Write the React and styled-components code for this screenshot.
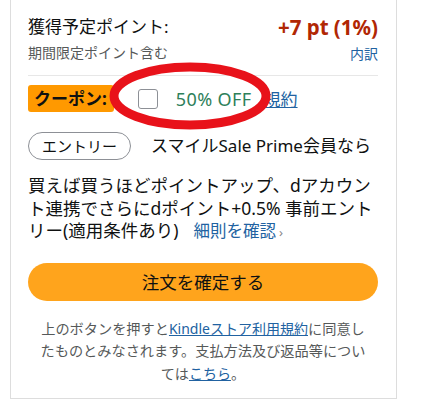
import React from "react";
import styled, { createGlobalStyle } from "styled-components";

const GlobalStyle = createGlobalStyle`
  body {
    margin: 0;
    background: #fff;
    font-family: "Noto Sans", "Noto Sans CJK JP", sans-serif;
    color: #0f1111;
  }
`;

const Card = styled.div`
  margin-left: 10px;
  width: 350px;
  border: 1px solid #dddddd;
  border-top: none;
  padding: 15px 18px 13px 17px;
  box-sizing: content-box;
`;

const Row = styled.div`
  display: flex;
  justify-content: space-between;
  align-items: center;
  height: ${(p) => p.h || 24}px;
  margin-top: ${(p) => p.top || 0}px;
`;

const Label = styled.span`
  font-size: 17px;
  line-height: 24px;
`;

const Price = styled.span`
  font-size: 20.5px;
  line-height: 24px;
  font-weight: 700;
  color: #b12704;
`;

const Sub = styled.span`
  font-size: 14px;
  line-height: 20px;
  color: #565959;
`;

const Link = styled.a`
  color: #2162a1;
  font-size: ${(p) => p.size || 14}px;
  text-decoration: ${(p) => (p.underline ? "underline" : "none")};
  cursor: pointer;
`;

const Divider = styled.hr`
  border: none;
  border-top: 1px solid #e7e7e7;
  margin: 12px 0 9px;
`;

const CouponRow = styled.div`
  position: relative;
  display: flex;
  align-items: center;
  height: 27px;
`;

const Badge = styled.span`
  background: #ff9900;
  border-radius: 3px;
  font-weight: 700;
  font-size: 17px;
  line-height: 27px;
  padding: 0 7px 0 6px;
`;

const Check = styled.span`
  width: 18px;
  height: 18px;
  border: 1px solid #8d9096;
  border-radius: 3px;
  margin-left: 24px;
  background: #fff;
`;

const Off = styled.span`
  color: #2e805a;
  font-size: 18px;
  letter-spacing: 0.4px;
  margin-left: 18px;
  margin-right: 12px;
`;

const Mark = styled.svg`
  position: absolute;
  left: 78px;
  top: -26px;
  pointer-events: none;
`;

const EntryRow = styled.div`
  display: flex;
  align-items: center;
  gap: 20px;
  margin-top: 20px;
`;

const Pill = styled.span`
  border: 1px solid #8d9096;
  border-radius: 14px;
  height: 26px;
  line-height: 26px;
  padding: 0 13px;
  font-size: 15px;
`;

const Para = styled.div`
  margin-top: 14px;
  font-size: 17.5px;
  line-height: 22.5px;
`;

const Line = styled.div`
  white-space: nowrap;
`;

const Detail = styled(Link)`
  margin-left: 15px;
`;

const Chevron = styled.span`
  color: #888;
  font-size: 13px;
  margin-left: 3px;
`;

const Button = styled.button`
  display: block;
  width: 100%;
  height: 38px;
  margin-top: 19px;
  border: none;
  border-radius: 19px;
  background: #ffa41c;
  font-family: inherit;
  font-size: 17.5px;
  color: #0f1111;
`;

const Note = styled.div`
  margin-top: 17px;
  text-align: center;
  font-size: 14.2px;
  line-height: 22.5px;
  color: #565959;
`;

export default function App() {
  return (
    <>
      <GlobalStyle />
      <Card>
        <Row>
          <Label>獲得予定ポイント:</Label>
          <Price>+7 pt (1%)</Price>
        </Row>
        <Row top={4} h={20}>
          <Sub>期間限定ポイント含む</Sub>
          <Link>内訳</Link>
        </Row>
        <Divider />
        <CouponRow>
          <Badge>クーポン:</Badge>
          <Check />
          <Off>50% OFF</Off>
          <Link size={17} underline>
            規約
          </Link>
          <Mark width="168" height="74" viewBox="0 0 168 74">
            <ellipse cx="84" cy="37" rx="76" ry="29" fill="none" stroke="#e8121a" strokeWidth="9" />
          </Mark>
        </CouponRow>
        <EntryRow>
          <Pill>エントリー</Pill>
          <Label>スマイルSale Prime会員なら</Label>
        </EntryRow>
        <Para>
          <Line>{"買えば買うほどポイントアップ、dアカウン"}</Line>
          <Line>{"ト連携でさらにdポイント+0.5% 事前エント"}</Line>
          <Line>
            {"リー(適用条件あり)"}
            <Detail size={16.5}>細則を確認</Detail>
            <Chevron>›</Chevron>
          </Line>
        </Para>
        <Button>注文を確定する</Button>
        <Note>
          <Line>
            上のボタンを押すと<Link underline>Kindleストア利用規約</Link>に同意し
          </Line>
          <Line>{"たものとみなされます。支払方法及び返品等につい"}</Line>
          <Line>
            ては<Link underline>こちら</Link>。
          </Line>
        </Note>
      </Card>
    </>
  );
}
